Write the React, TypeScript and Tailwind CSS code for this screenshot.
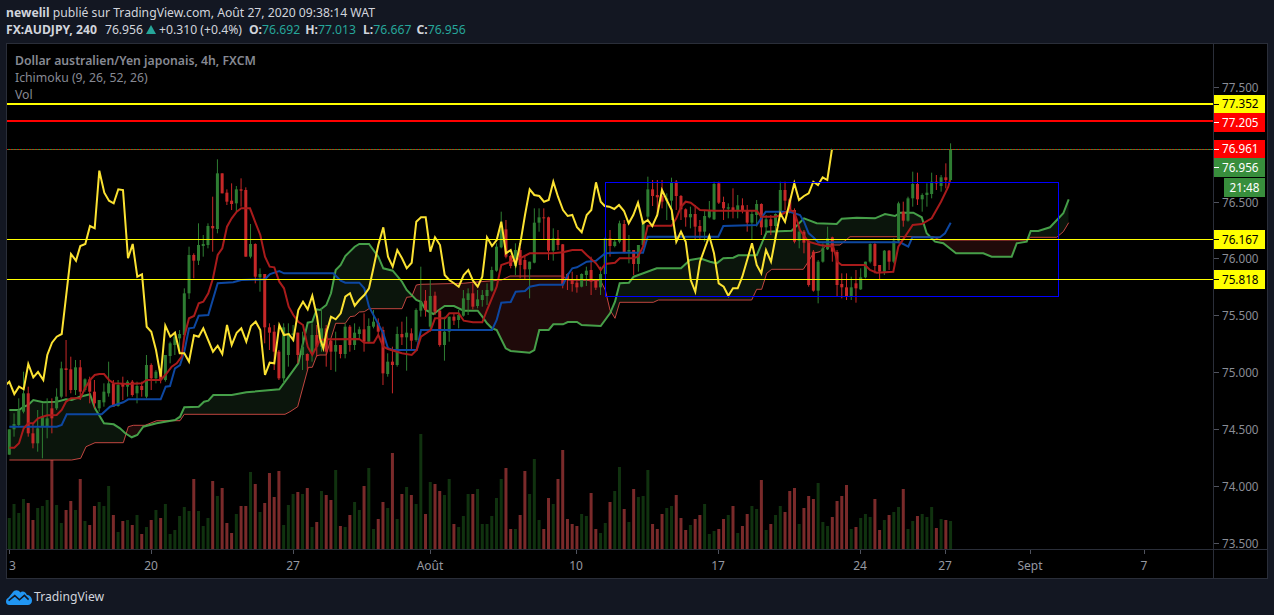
// TradingView snapshot: AUD/JPY 4h with Ichimoku and volume
type Pt = [number, number]

const FONT = "font-['Noto_Sans','Open_Sans',sans-serif]"

const barX = (i: number) => 9.3 + 4.73 * i

// volume: top of bar, negative means red
const VOL = [
  264, 222, 249, 207, -219, -270, 234, 228, 210, -9, 225, 279, -240, -213, 240, -147, 273, -285, -228, 216, 228, 168, -255, 306, -273, 270, -285, 255, -312, 291, -270, 240, -264, 222, 312, 300, 258, 231, 243, -147, 243, 288, 264, -153, 198, -174, -279, -309, 252, -228, -228, 126, -162, 246, -219, -129, -201, -123, 285, 225, 192, -186, 192, -174, 291, -276, 183, -195, -210, 120, -288, 291, -255, 216, 240, -168, 114, 297, -267, -216, 234, -69, 267, -192, 171, -195, 222, 12, -252, 156, -162, -183, 195, 147, -282, 291, 258, 192, -192, 177,
  282, 282, 258, 204, 147, -114, -297, 297, -255, -123, 192, 87, 270, -297, -204, 222, -147, -60, -267, -282, -288, 252, 258, -189, -297, 309, 279, -216, 183, 111, -237, 276, -177, 201, 198, 120, -282, -297, -252, 234, 228, -195, -264, -300, 285, -267, -255, 222, 312, 303, -297, -267, 255, -228, 309, -288, -252, 228, 237, -150, 300, -282, 255, 228, -246, -183, -174, 282, -234, -198, -207, 159, 276, 288, -261, -213, -198, -165, 297, -291, 264, 252, 261, -207, -300, 270, -255, 246, 231, -177, 297, 273, -258, 252, 261, 231, -294, 267, -270, 273,
]

// candles: wick top, body top, body bottom, wick bottom (zoomed y)
const C1 = [
  [838, 838, 914, 914], [790, 822, 838, 860], [745, 780, 825, 830], [665, 730, 785, 790], [710, 730, 850, 860], [820, 850, 880, 895], [780, 835, 880, 905], [760, 800, 830, 925], [745, 805, 830, 865], [745, 775, 805, 850],
  [715, 740, 775, 780], [635, 655, 740, 745], [570, 655, 660, 740], [620, 658, 720, 730], [630, 652, 720, 735], [630, 652, 725, 750], [685, 688, 720, 725], [680, 688, 725, 760], [690, 725, 760, 775], [750, 750, 775, 785],
  [700, 725, 757, 770], [635, 700, 730, 740], [690, 700, 770, 770], [690, 705, 768, 770], [680, 700, 710, 750], [690, 695, 710, 740], [690, 695, 735, 740], [695, 708, 730, 760], [695, 708, 720, 740], [615, 645, 740, 745],
  [640, 645, 685, 720], [660, 665, 685, 700], [660, 665, 690, 700], [615, 615, 690, 695], [575, 580, 618, 640], [555, 560, 585, 615], [540, 552, 565, 600], [415, 430, 555, 565], [290, 315, 430, 447], [310, 315, 332, 385],
  [220, 285, 332, 345], [255, 282, 288, 320], [220, 228, 285, 295], [140, 228, 235, 305], [28, 70, 237, 250], [70, 70, 130, 130], [118, 128, 155, 165], [100, 152, 162, 180], [108, 118, 160, 185], [85, 118, 122, 170],
  [112, 120, 320, 320], [222, 282, 320, 325], [280, 282, 380, 400], [355, 372, 382, 425], [372, 372, 532, 580], [520, 532, 548, 600], [525, 545, 605, 660], [600, 605, 685, 690], [520, 532, 685, 700], [520, 550, 615, 650],
  [525, 550, 555, 575], [548, 548, 615, 640], [545, 590, 615, 660], [610, 612, 632, 660], [520, 555, 610, 635], [525, 555, 590, 620],
]
const C2 = [
  [475, 535, 590, 605], [525, 535, 605, 650], [570, 572, 605, 660], [545, 585, 605, 665], [585, 585, 612, 625], [520, 530, 612, 625], [525, 530, 585, 605], [520, 548, 585, 600], [530, 538, 552, 565], [490, 538, 575, 605],
  [505, 528, 575, 580], [480, 515, 530, 535], [505, 518, 545, 560], [530, 540, 670, 705], [610, 635, 672, 680], [590, 635, 645, 730], [530, 552, 645, 650], [515, 552, 562, 585], [500, 548, 562, 662], [535, 550, 572, 600],
  [475, 480, 570, 575], [350, 455, 482, 500], [420, 452, 480, 500], [390, 438, 530, 545], [425, 437, 485, 495], [480, 482, 585, 590], [500, 545, 585, 632], [500, 500, 545, 575], [490, 500, 512, 525], [480, 495, 510, 535],
  [420, 445, 497, 500], [415, 430, 450, 495], [400, 430, 470, 478], [420, 448, 468, 475], [420, 435, 450, 470], [400, 420, 438, 465], [350, 360, 422, 425], [280, 290, 362, 365], [185, 238, 292, 295], [210, 238, 320, 325],
  [315, 318, 348, 355], [280, 300, 348, 375], [290, 300, 345, 385], [315, 330, 358, 390], [335, 335, 358, 445], [175, 218, 338, 340], [175, 202, 218, 245], [175, 202, 205, 270], [200, 202, 302, 330], [235, 265, 302, 332],
  [240, 265, 285, 300], [282, 283, 402, 415], [370, 372, 388, 420], [365, 388, 402, 425], [375, 398, 412, 428], [370, 372, 410, 412], [350, 362, 375, 408], [320, 360, 395, 435], [390, 393, 413, 420], [350, 372, 412, 435],
  [262, 265, 372, 375], [240, 265, 288, 320], [270, 275, 288, 292], [212, 220, 275, 280], [210, 222, 308, 310], [255, 300, 305, 340], [300, 300, 342, 375], [285, 285, 342, 365],
]
const C3 = [
  [270, 272, 345, 350], [140, 178, 260, 270], [150, 178, 198, 228], [150, 195, 202, 260], [150, 198, 215, 235], [190, 205, 212, 270], [143, 158, 212, 270], [150, 155, 198, 240], [195, 198, 238, 270], [235, 238, 262, 290],
  [230, 252, 262, 295], [225, 252, 290, 330], [270, 288, 305, 330], [240, 258, 305, 335], [213, 240, 262, 265], [155, 162, 268, 270], [155, 160, 218, 222], [200, 216, 235, 270], [220, 232, 236, 265], [175, 232, 240, 265],
  [195, 226, 240, 265], [205, 226, 242, 250], [225, 240, 278, 305], [240, 252, 278, 330], [210, 222, 255, 290], [220, 222, 292, 315], [255, 268, 292, 310], [255, 268, 288, 315], [250, 252, 288, 325], [155, 180, 252, 255],
  [155, 180, 212, 240], [205, 208, 240, 250], [235, 240, 335, 340], [295, 305, 332, 355], [300, 305, 338, 370], [330, 332, 465, 470], [360, 365, 482, 485], [390, 395, 482, 520], [340, 355, 395, 398], [290, 325, 358, 360],
  [320, 322, 365, 395], [360, 366, 465, 500], [430, 462, 472, 505], [430, 472, 498, 510], [440, 472, 498, 510], [420, 460, 475, 518], [415, 442, 478, 480], [395, 395, 442, 445], [340, 342, 395, 400], [335, 342, 408, 430],
  [405, 405, 425, 450], [360, 362, 425, 435], [360, 362, 395, 420], [325, 332, 395, 400], [215, 220, 332, 340], [215, 245, 272, 290], [200, 205, 272, 275], [125, 162, 205, 230], [128, 162, 208, 225], [190, 195, 208, 245],
  [160, 188, 195, 230], [128, 155, 192, 205], [135, 155, 160, 180], [135, 142, 168, 185], [100, 142, 150, 175], [40, 57, 150, 155],
]
const CANDLES = [
  ...C1.map((c) => c.map((v) => 150 + v / 3)),
  ...C2.map((c) => c.map((v) => 150 + v / 3)),
  ...C3.map((c) => c.map((v) => 130 + v / 3)),
]

const z = (x0: number, y0: number, pts: number[][]): Pt[] => pts.map(([x, y]) => [x0 + x / 3, y0 + y / 3])

const YELLOW = [
  ...z(0, 150, [[20, 703], [28, 695], [43, 732], [57, 710], [71, 718], [85, 642], [100, 682], [114, 666], [130, 690], [142, 615], [156, 578], [170, 560], [185, 552], [213, 312], [228, 332], [241, 288], [256, 282], [270, 228], [284, 235], [298, 62], [313, 128], [327, 152], [341, 160], [355, 118], [369, 120], [384, 325], [398, 282], [412, 380], [426, 373], [440, 530], [454, 545], [468, 600], [482, 680], [496, 527], [511, 560], [525, 548], [539, 610], [553, 610], [567, 635], [582, 556], [596, 560], [610, 535], [639, 605], [653, 587], [667, 612], [681, 525], [695, 585], [710, 548], [724, 535], [739, 575], [753, 528], [767, 515], [781, 540], [795, 675], [809, 638], [823, 640], [838, 525], [852, 555], [866, 552], [880, 570], [895, 480], [909, 455], [923, 478], [937, 437], [951, 500]]),
  ...z(320, 150, [[0, 565], [10, 595], [19, 550], [33, 500], [47, 508], [62, 490], [76, 440], [90, 430], [104, 467], [118, 450], [133, 435], [147, 415], [161, 350], [175, 285], [190, 232], [204, 320], [218, 350], [232, 300], [246, 325], [260, 355], [275, 338], [289, 215], [303, 202], [317, 202], [331, 305], [345, 262], [360, 285], [374, 375], [388, 390], [402, 400], [416, 410], [431, 375], [445, 360], [459, 392], [473, 410], [487, 380], [501, 262], [516, 288], [530, 270], [544, 215], [558, 310], [572, 300], [587, 345], [601, 280], [615, 195], [629, 118], [643, 135], [658, 138], [672, 155], [686, 150], [700, 95], [714, 140], [729, 180], [743, 198], [757, 195], [771, 232], [785, 247], [800, 195], [814, 180], [828, 97], [842, 155]]),
  ...z(600, 130, [[14, 228], [28, 230], [43, 237], [57, 225], [72, 243], [86, 280], [100, 255], [114, 218], [129, 280], [143, 270], [157, 288], [172, 255], [186, 180], [200, 210], [215, 240], [229, 335], [243, 305], [257, 335], [272, 450], [286, 485], [300, 395], [328, 318], [342, 370], [356, 460], [371, 470], [385, 497], [399, 475], [413, 475], [427, 440], [456, 340], [470, 405], [484, 430], [498, 360], [513, 395], [527, 320], [541, 250], [555, 275], [583, 160], [597, 210], [612, 198], [626, 190], [640, 155], [654, 165], [668, 142], [682, 150], [696, 57]]),
]

const TENKAN = [
  ...z(0, 150, [[28, 893], [43, 893], [57, 880], [71, 835], [85, 820], [100, 820], [114, 805], [128, 800], [142, 796], [156, 796], [170, 795], [185, 780], [198, 755], [213, 745], [241, 745], [255, 715], [270, 690], [284, 675], [298, 672], [312, 672], [327, 690], [341, 700], [383, 702], [425, 700], [440, 690], [482, 690], [500, 670], [515, 650], [530, 640], [545, 620], [553, 560], [567, 505], [582, 498], [596, 460], [610, 455], [625, 430], [639, 385], [653, 315], [667, 295], [681, 230], [695, 205], [710, 185], [724, 175], [750, 175], [767, 220], [781, 255], [795, 320], [809, 350], [823, 352], [838, 395], [852, 415], [866, 470], [880, 495], [895, 515], [909, 525], [923, 590], [937, 615]]),
  ...z(320, 150, [[0, 570], [19, 568], [118, 567], [133, 578], [161, 578], [175, 555], [190, 590], [204, 597], [246, 610], [275, 615], [290, 600], [303, 560], [332, 540], [345, 505], [375, 505], [388, 490], [416, 490], [431, 512], [459, 517], [487, 517], [501, 480], [530, 410], [544, 345], [572, 335], [600, 325], [629, 310], [700, 310], [729, 307], [757, 300], [785, 300], [800, 315], [828, 340], [842, 360], [856, 342], [885, 338], [899, 325]]),
  ...z(600, 130, [[57, 385], [100, 385], [114, 380], [129, 350], [143, 287], [172, 287], [215, 287], [229, 265], [243, 230], [257, 215], [272, 218], [300, 240], [342, 242], [470, 242], [484, 260], [527, 260], [541, 255], [570, 240], [583, 245], [600, 300], [625, 335], [660, 345], [700, 350], [712, 395], [725, 405], [795, 405], [810, 420], [830, 428], [880, 425], [895, 350], [938, 285], [965, 282], [995, 265], [1023, 215], [1045, 170], [1050, 150]]),
]

const KIJUN = [
  ...z(0, 150, [[28, 830], [170, 830], [185, 825], [200, 793], [305, 793], [330, 770], [370, 757], [385, 748], [482, 748], [497, 710], [510, 708], [525, 655], [540, 645], [553, 605], [567, 535], [582, 533], [596, 497], [625, 495], [653, 400], [700, 397], [724, 390], [795, 388], [810, 372], [838, 363], [852, 370]]),
  ...z(320, 150, [[0, 370], [40, 370], [62, 392], [76, 398], [118, 398], [133, 415], [147, 470], [190, 550], [204, 595], [218, 600], [290, 600], [303, 540], [516, 540], [530, 510], [544, 458], [572, 456], [587, 425], [615, 423], [629, 410], [658, 404], [729, 404], [743, 375], [757, 355], [771, 352], [800, 335], [828, 332], [856, 310], [899, 308]]),
  ...z(600, 130, [[28, 368], [129, 368], [143, 320], [355, 320], [370, 288], [470, 285], [497, 245], [570, 245], [600, 255], [612, 275], [626, 310], [640, 322], [655, 337], [900, 337], [925, 350], [937, 322], [1020, 322], [1035, 310], [1052, 278]]),
]

const SPAN_A = [
  ...z(0, 150, [[28, 780], [57, 780], [71, 770], [85, 765], [100, 750], [130, 757], [170, 755], [198, 748], [215, 750], [240, 740], [270, 733], [285, 775], [312, 820], [341, 823], [360, 835], [376, 850], [395, 862], [412, 855], [430, 830], [470, 820], [525, 810], [540, 800], [553, 772], [596, 770], [612, 755], [625, 752], [640, 735], [695, 735], [739, 727], [838, 718], [866, 680], [895, 640], [923, 518], [937, 515], [950, 478]]),
  ...z(320, 150, [[0, 480], [19, 465], [33, 430], [47, 360], [62, 345], [76, 318], [104, 290], [118, 282], [147, 282], [175, 320], [190, 355], [218, 362], [246, 395], [260, 420], [289, 450], [303, 455], [317, 480], [340, 492], [360, 478], [374, 468], [402, 468], [431, 482], [473, 482], [487, 500], [501, 520], [516, 535], [530, 540], [557, 595], [572, 603], [629, 608], [643, 600], [658, 540], [686, 540], [700, 523], [729, 523], [743, 516], [771, 516], [785, 525], [842, 528], [870, 490], [885, 455], [899, 400], [927, 398], [941, 380]]),
  ...z(600, 130, [[130, 430], [170, 415], [243, 415], [270, 390], [300, 385], [330, 395], [350, 400], [370, 385], [400, 383], [415, 376], [470, 376], [500, 305], [575, 302], [612, 265], [650, 280], [710, 282], [725, 266], [770, 263], [825, 265], [855, 252], [885, 258], [900, 248], [940, 248], [965, 262], [980, 310], [1005, 335], [1030, 340], [1068, 370], [1150, 370], [1175, 380], [1235, 380], [1250, 340], [1280, 335], [1292, 303], [1315, 303], [1350, 292], [1390, 250], [1406, 208]]),
]

const SPAN_B = [
  ...z(0, 150, [[28, 930], [215, 930], [242, 925], [258, 890], [285, 878], [370, 878], [385, 830], [400, 826], [435, 826], [470, 812], [540, 812], [553, 793], [855, 793], [870, 785], [893, 770], [925, 652], [937, 652], [950, 617]]),
  ...z(320, 150, [[0, 615], [19, 615], [33, 565], [47, 520], [76, 520], [90, 500], [104, 498], [118, 486], [133, 485], [147, 476], [246, 476], [260, 442], [275, 440], [289, 405], [302, 403], [430, 400], [460, 397], [545, 390], [570, 378], [729, 378], [743, 390], [842, 392], [856, 420], [870, 480], [885, 505], [899, 457]]),
  ...z(600, 130, [[160, 517], [175, 510], [455, 510], [470, 478], [485, 478], [500, 430], [515, 418], [610, 418], [625, 395], [640, 370], [660, 365], [680, 345], [720, 345], [750, 320], [1000, 320], [1020, 330], [1280, 330], [1292, 322], [1370, 322], [1390, 305], [1406, 278]]),
]

const toLine = (pts: Pt[]) => pts.map(([x, y]) => `${x.toFixed(1)},${y.toFixed(1)}`).join(" ")

const yAt = (pts: Pt[], x: number) => {
  for (let i = 1; i < pts.length; i++) {
    if (x <= pts[i][0]) {
      const [x0, y0] = pts[i - 1]
      const [x1, y1] = pts[i]
      return y0 + ((y1 - y0) * (x - x0)) / (x1 - x0 || 1)
    }
  }
  return pts[pts.length - 1][1]
}

// cloud fill: green where span A is above span B, red where it is below
const cloud = (() => {
  const green: Pt[] = []
  const red: Pt[] = []
  const lower: Pt[] = []
  for (let x = 9.5; x <= 1068.5; x += 1) {
    const a = yAt(SPAN_A, x)
    const b = yAt(SPAN_B, x)
    green.push([x, a])
    red.push([x, b])
    lower.unshift([x, Math.max(a, b)])
  }
  return { green: toLine([...green, ...lower]), red: toLine([...red, ...lower]) }
})()

const PRICE_TICKS = [
  { label: "77.500", cls: "top-[34px]" },
  { label: "76.500", cls: "top-[149px]" },
  { label: "76.000", cls: "top-[205px]" },
  { label: "75.500", cls: "top-[262px]" },
  { label: "75.000", cls: "top-[319px]" },
  { label: "74.500", cls: "top-[376px]" },
  { label: "74.000", cls: "top-[433px]" },
  { label: "73.500", cls: "top-[490px]" },
]

const PRICE_BADGES = [
  { label: "77.352", cls: "top-[51px] h-[18px] bg-[#ffff00] text-black", tick: "bg-black" },
  { label: "77.205", cls: "top-[69px] h-[19px] bg-[#ff0000] text-white", tick: "bg-white" },
  { label: "76.961", cls: "top-[96px] h-[18px] bg-[#ff0000] text-white", tick: "bg-white" },
  { label: "76.956", cls: "top-[114px] h-[19px] bg-[#388e3c] text-white", tick: "bg-white" },
  { label: "76.167", cls: "top-[186px] h-[19px] bg-[#ffff00] text-black", tick: "bg-black" },
  { label: "75.818", cls: "top-[226px] h-[19px] bg-[#ffff00] text-black", tick: "bg-black" },
]

const TIME_TICKS = [
  { label: "20", cls: "left-[117px]" },
  { label: "27", cls: "left-[259px]" },
  { label: "Août", cls: "left-[396px]" },
  { label: "10", cls: "left-[542px]" },
  { label: "17", cls: "left-[684px]" },
  { label: "24", cls: "left-[826px]" },
  { label: "27", cls: "left-[911px]" },
  { label: "Sept", cls: "left-[996px]" },
  { label: "7", cls: "left-[1110px]" },
]

const Chart = () => (
  <svg viewBox="7 44 1206 505" className="block h-[505px] w-[1206px]">
    {VOL.map((v, i) => {
      const top = i === 9 ? 432 : 430 + Math.abs(v) / 3
      return (
        <rect key={i} x={barX(i) - 1.5} y={top} width={3} height={549 - top} fill={v < 0 ? "#7a2a2a" : "#10320f"} />
      )
    })}
    <polygon points={cloud.green} fill="#0b150c" />
    <polygon points={cloud.red} fill="#1f0a0a" />
    <polyline points={toLine(SPAN_B)} fill="none" stroke="#e0504a" strokeWidth={1} strokeOpacity={0.85} />
    <polyline points={toLine(SPAN_A)} fill="none" stroke="#4caf50" strokeWidth={2} strokeOpacity={0.9} />
    {CANDLES.map(([wt, bt, bb, wb], i) => {
      const color = VOL[i] < 0 ? "#c62828" : "#2e7d32"
      const x = barX(i)
      return (
        <g key={i}>
          <rect x={x - 0.5} y={wt} width={1} height={wb - wt} fill={color} />
          <rect x={x - 1.5} y={bt} width={3} height={Math.max(bb - bt, 1)} fill={color} />
        </g>
      )
    })}
    <polyline points={toLine(KIJUN)} fill="none" stroke="#0d47a1" strokeWidth={2} />
    <polyline points={toLine(TENKAN)} fill="none" stroke="#a81b1b" strokeWidth={2} />
    <polyline points={toLine(YELLOW)} fill="none" stroke="#fbe232" strokeWidth={2} />
    <rect x={605.5} y={182.5} width={453} height={114} fill="none" stroke="#0000ff" strokeWidth={1} />
    <rect x={7} y={103} width={1206} height={2} fill="#ffff00" />
    <rect x={7} y={120} width={1206} height={2} fill="#ff0000" />
    <rect x={7} y={239} width={1206} height={1} fill="#ffff00" />
    <rect x={7} y={279} width={1206} height={1} fill="#ffff00" />
    <line x1={7} x2={1213} y1={149.5} y2={149.5} stroke="#388e3c" />
    <line x1={7} x2={1213} y1={149.5} y2={149.5} stroke="#ff0000" strokeDasharray="1 2" />
  </svg>
)

const TvLogo = () => (
  <svg viewBox="0 0 26 15" className="h-[15px] w-[26px] shrink-0">
    <path
      d="M0 11.6C0 9.5 1.2 8.4 2.6 7.6L6.6 2.4C7.6 1 9 .2 10.4.2c1.7 0 3 .8 3.9 2.2.6-.5 1.4-.8 2.4-.8 2 0 3.5 1.3 4 3.2 2.6.3 5.3 2.4 5.3 5.7 0 2.8-1.9 4.5-4.3 4.5H3.2C1.3 15 0 13.6 0 11.6z"
      fill="#2196f3"
    />
    <path d="M2.6 10.7 8.8 5.6 13.4 9.8 18.4 5.4 22.6 9.6" fill="none" stroke="#131722" strokeWidth={1.5} />
  </svg>
)

const App = () => {
  return (
    <div className={`flex h-[615px] w-[1274px] flex-col overflow-hidden bg-[#131722] text-[12.2px] text-[#d1d4dc] ${FONT}`}>
      <div className="flex h-[43px] flex-col pl-[6px] pt-[4px] leading-[17px]">
        <div>
          <span className="font-bold">newelil</span> publié sur TradingView.com, Août 27, 2020 09:38:14 WAT
        </div>
        <div className="flex items-center whitespace-pre">
          <span className="font-bold">FX:AUDJPY, 240</span>
          <span className="ml-[8px]">76.956</span>
          <span className="mx-[3px] h-0 w-0 border-x-[5px] border-b-[9px] border-x-transparent border-b-[#26a69a]" />
          <span>+0.310 (+0.4%)</span>
          <span className="ml-[7px] font-bold">O:</span>
          <span className="text-[#26a69a]">76.692</span>
          <span className="ml-[5px] font-bold">H:</span>
          <span className="text-[#26a69a]">77.013</span>
          <span className="ml-[7px] font-bold">L:</span>
          <span className="text-[#26a69a]">76.667</span>
          <span className="ml-[5px] font-bold">C:</span>
          <span className="text-[#26a69a]">76.956</span>
        </div>
      </div>

      <div className="ml-[6px] flex h-[536px] w-[1262px] flex-col border border-[#2a2e39] bg-black">
        <div className="relative flex h-[505px]">
          <Chart />
          <div className="relative flex-1 border-l border-[#2a2e39]">
            {PRICE_TICKS.map((t) => (
              <div key={t.label} className={`absolute left-0 flex h-[19px] w-[51px] items-center text-[11.7px] text-[#8a8d96] ${t.cls}`}>
                <span className="h-px w-[5px] bg-[#50535e]" />
                <span className="ml-[3px]">{t.label}</span>
              </div>
            ))}
            {PRICE_BADGES.map((b) => (
              <div key={b.label} className={`absolute left-0 flex w-[51px] items-center text-[11.7px] ${b.cls}`}>
                <span className={`h-px w-[5px] ${b.tick}`} />
                <span className="ml-[3px]">{b.label}</span>
              </div>
            ))}
            <div className="absolute left-[10px] top-[134px] flex h-[19px] w-[41px] items-center justify-center bg-[#388e3c] text-[11.7px] text-white">
              21:48
            </div>
          </div>
          <div className="absolute left-[8px] top-[8px] flex flex-col text-[12.25px] leading-[17px] text-[#868993]">
            <span className="font-semibold">Dollar australien/Yen japonais, 4h, FXCM</span>
            <span>Ichimoku (9, 26, 52, 26)</span>
            <span>Vol</span>
          </div>
        </div>
        <div className="flex h-[29px] border-t border-[#2a2e39]">
          <div className="relative w-[1206px] text-[12px] text-[#9598a1]">
            <span className="absolute left-[2px] top-0 h-[4px] w-px bg-[#50535e]" />
            <span className="absolute left-[2px] top-[7px] leading-[17px]">3</span>
            {TIME_TICKS.map((t) => (
              <div key={t.cls} className={`absolute top-0 flex w-[54px] flex-col items-center ${t.cls}`}>
                <span className="h-[4px] w-px bg-[#50535e]" />
                <span className="mt-[3px] leading-[17px]">{t.label}</span>
              </div>
            ))}
          </div>
          <div className="flex-1 border-l border-[#2a2e39]" />
        </div>
      </div>

      <div className="flex flex-1 items-center gap-[2px] pl-[6px]">
        <TvLogo />
        <span className="text-[12.2px]">TradingView</span>
      </div>
    </div>
  )
}

export default App
